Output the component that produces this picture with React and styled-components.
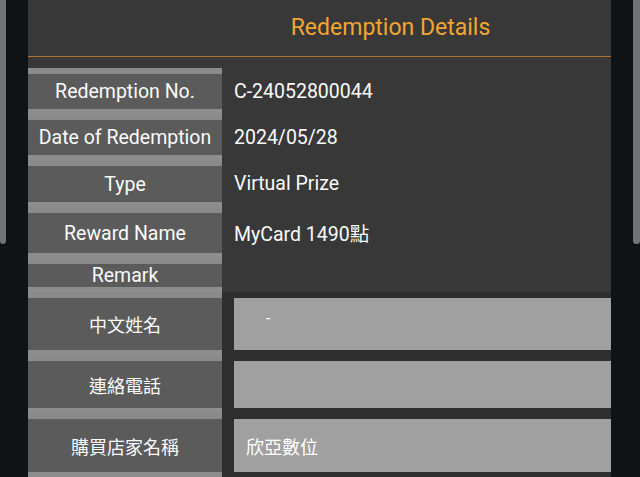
import React from 'react';
import styled, { createGlobalStyle } from 'styled-components';

const GlobalStyle = createGlobalStyle`
  html, body {
    margin: 0;
    padding: 0;
    background: #0f1316;
  }
  body {
    font-family: Roboto, "Noto Sans CJK TC", "Noto Sans", sans-serif;
  }
`;

const Page = styled.div`
  display: flex;
  width: 640px;
  height: 477px;
  overflow: hidden;
  background: #0f1316;
`;

const Rail = styled.div`
  width: ${(p) => p.w}px;
  flex-shrink: 0;
  display: flex;
  justify-content: ${(p) => (p.right ? 'flex-end' : 'flex-start')};
  align-items: flex-start;
`;

const Thumb = styled.div`
  width: ${(p) => p.w}px;
  height: 244px;
  background: #6f7479;
  border-radius: 0 0 3px 3px;
`;

const Panel = styled.div`
  width: 583px;
  flex-shrink: 0;
  background: #383838;
  display: flex;
  flex-direction: column;
`;

const Header = styled.div`
  height: 56px;
  border-bottom: 1px solid #b0702e;
  display: flex;
  align-items: center;
  justify-content: center;
  padding-left: 142px;
  margin-bottom: 11px;
`;

const Title = styled.h1`
  margin: 0;
  font-size: 23px;
  font-weight: 400;
  color: #f2a531;
  padding-bottom: 2px;
`;

const Row = styled.div`
  display: flex;
`;

const Label = styled.div`
  width: 194px;
  flex-shrink: 0;
  height: ${(p) => p.h}px;
  border-top: 6px solid #8a8a8a;
  border-bottom: 5px solid #8d8d8d;
  background: #5b5b5b;
  color: #fafafa;
  font-size: ${(p) => (p.cjk ? 18 : 19.5)}px;
  display: flex;
  align-items: center;
  justify-content: center;
  white-space: nowrap;
`;

const Value = styled.div`
  flex: 1;
  display: flex;
  align-items: center;
  padding: ${(p) => (p.field ? '6px 0 5px 12px' : '0 0 0 12px')};
  background: ${(p) => (p.field ? '#2e2e2e' : 'transparent')};
  color: #fafafa;
  font-size: 19.5px;
  white-space: nowrap;
`;

const Field = styled.div`
  align-self: stretch;
  flex: 1;
  background: #a0a0a0;
  color: #ffffff;
  font-size: 18px;
  display: flex;
  align-items: center;
  padding-left: 12px;
`;

const Dash = styled.span`
  font-size: 16px;
  margin: 0 0 12px 20px;
`;

const rows = [
  { label: 'Redemption No.', value: 'C-24052800044', h: 35 },
  { label: 'Date of Redemption', value: '2024/05/28', h: 35 },
  { label: 'Type', value: 'Virtual Prize', h: 36 },
  { label: 'Reward Name', value: 'MyCard 1490點', h: 40 },
  { label: 'Remark', value: '', h: 23 },
];

const fields = [
  { label: '中文姓名', value: <Dash>-</Dash>, h: 52 },
  { label: '連絡電話', value: '', h: 47 },
  { label: '購買店家名稱', value: '欣亞數位', h: 53 },
];

export default function App() {
  return (
    <>
      <GlobalStyle />
      <Page>
        <Rail w={28}>
          <Thumb w={6} />
        </Rail>
        <Panel>
          <Header>
            <Title>Redemption Details</Title>
          </Header>
          {rows.map((r) => (
            <Row key={r.label}>
              <Label h={r.h}>{r.label}</Label>
              <Value>{r.value}</Value>
            </Row>
          ))}
          {fields.map((r) => (
            <Row key={r.label}>
              <Label h={r.h} cjk>
                {r.label}
              </Label>
              <Value field>
                <Field>{r.value}</Field>
              </Value>
            </Row>
          ))}
        </Panel>
        <Rail w={29} right>
          <Thumb w={7} />
        </Rail>
      </Page>
    </>
  );
}
